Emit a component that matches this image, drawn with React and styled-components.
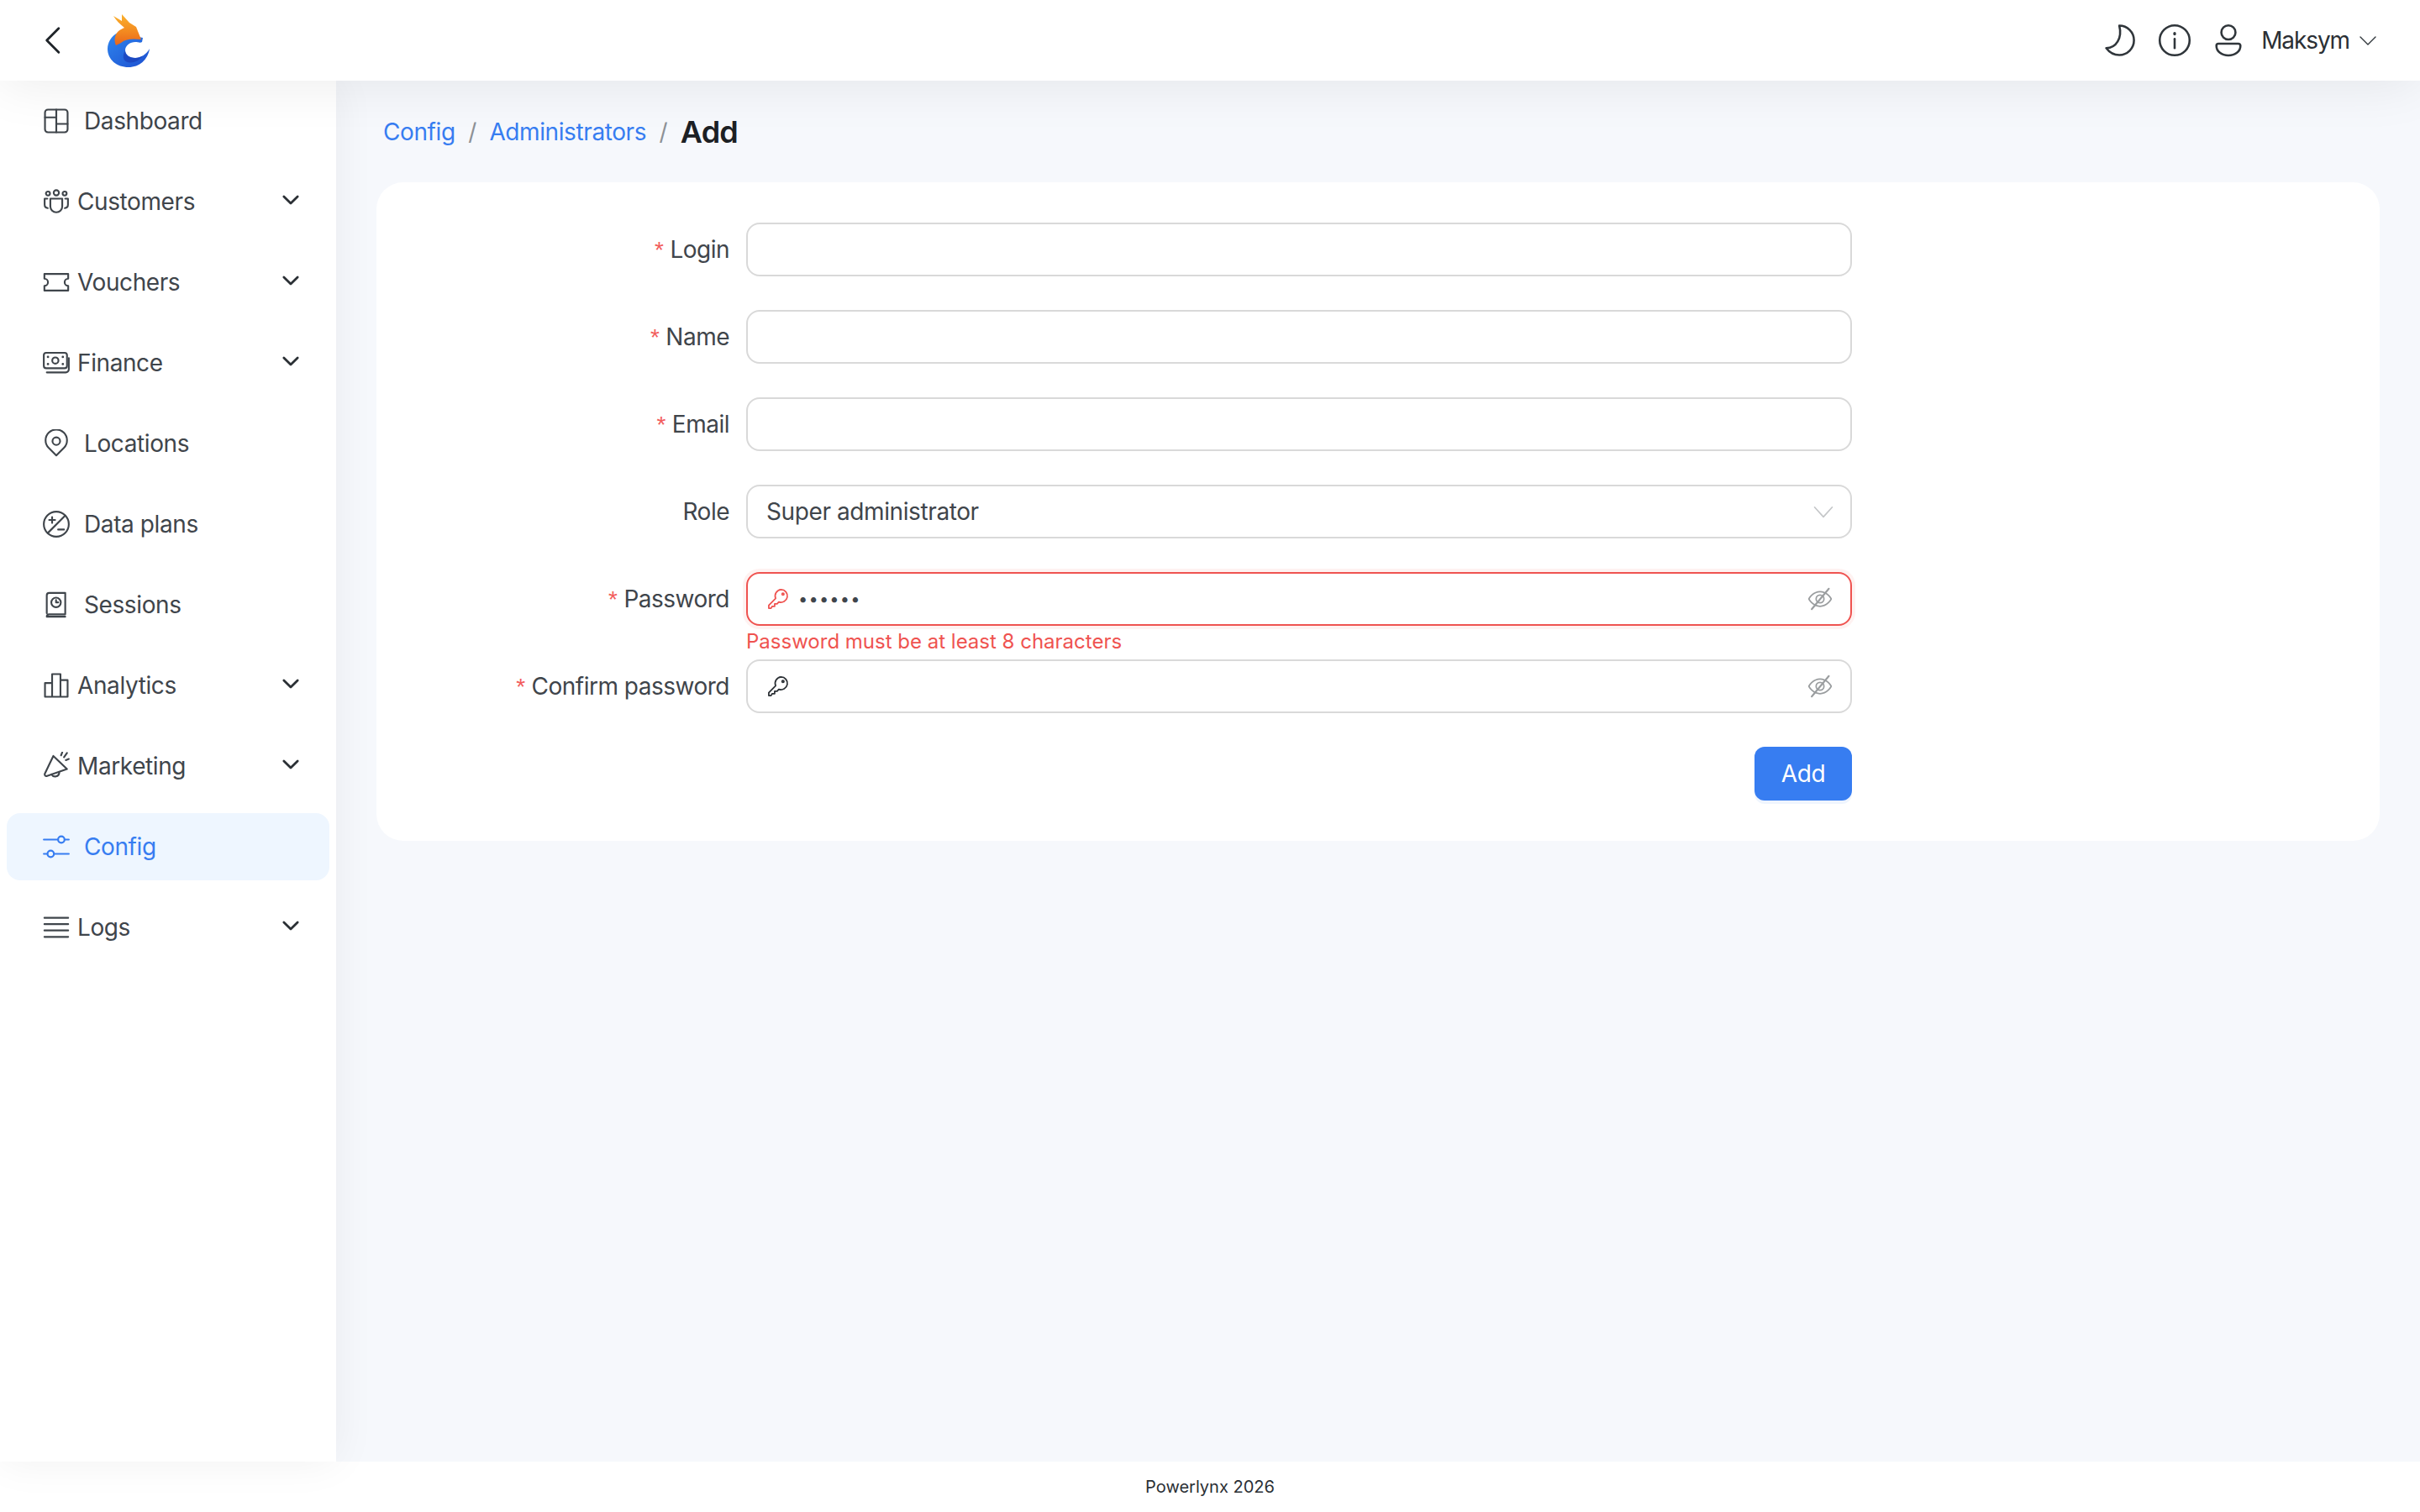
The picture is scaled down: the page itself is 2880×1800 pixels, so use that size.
import React from "react";
import styled, { createGlobalStyle } from "styled-components";

const Global = createGlobalStyle`
  html, body { margin: 0; padding: 0; height: 100%; }
  body { font-family: Inter, "Liberation Sans", sans-serif; background: #f6f8fc; color: #343a40; letter-spacing: -0.4px; }
  #root { height: 100%; }
  * { box-sizing: border-box; }
`;

const Page = styled.div`
  width: 2880px; height: 1800px; display: flex; flex-direction: column; overflow: hidden; background: #f6f8fc;
`;
const Header = styled.header`
  position: relative; z-index: 3; height: 96px; flex: none; background: #fff;
  display: flex; align-items: center; justify-content: space-between;
  padding: 0 50px 0 48px; box-shadow: 0 4px 64px rgba(0, 0, 0, 0.08);
`;
const HeaderLeft = styled.div`display: flex; align-items: center; gap: 44px;`;
const BackIcon = styled.span`display: flex; width: 40px; height: 40px; margin-left: -4px; color: #1f2429;`;
const HeaderRight = styled.div`display: flex; align-items: center; color: #1f2429;`;
const HeaderIcon = styled.span`display: flex; width: 44px; height: 44px; margin-right: 20px; color: #30363b;`;
const UserName = styled.span`font-size: 28px; margin-left: -3px; margin-right: 10px; letter-spacing: -1.1px; color: #2b3035;`;
const UserCaret = styled.span`display: flex; width: 24px; height: 24px; color: #30363b;`;
const Middle = styled.div`flex: 1; display: flex; min-height: 0;`;
const Sidebar = styled.nav`
  position: relative; z-index: 2; width: 400px; flex: none; background: #fff;
  padding: 8px 8px 0; display: flex; flex-direction: column; gap: 16px;
  box-shadow: 0 0 48px rgba(0, 0, 0, 0.06);
`;
const Item = styled.div`
  height: 80px; border-radius: 16px; display: flex; align-items: center; padding-left: 42px; padding-right: 32px;
  font-size: 28px; color: ${p => (p.$active ? "#377df1" : "#3f454b")};
  background: ${p => (p.$active ? "#eef6ff" : "transparent")};
`;
const ItemIcon = styled.span`display: flex; width: 34px; height: 34px; flex: none; margin-right: ${p => (p.$sub ? "8px" : "16px")};`;
const ItemLabel = styled.span`flex: 1;`;
const Chevron = styled.span`display: flex; width: 28px; height: 28px; color: #2b3035; margin-top: -4px;`;
const Content = styled.main`flex: 1; padding: 0 48px; min-width: 0;`;
const Crumbs = styled.div`
  height: 121px; display: flex; align-items: center; padding: 1px 8px 0; font-size: 28px;
`;
const Crumb = styled.span`color: #377df1;`;
const Sep = styled.span`color: #8d9196; margin: 0 15.500px;`;
const Current = styled.span`font-size: 36px; font-weight: 600; color: #1c2024; letter-spacing: -0.8px;`;
const Card = styled.section`
  background: #fff; border-radius: 32px; padding: 48px; height: 784px;
  display: flex; flex-direction: column;
`;
const Row = styled.div`
  display: grid; grid-template-columns: 372px 1316px; column-gap: 20px; align-items: center;
  height: 64px; margin-bottom: 40px; position: relative;
`;
const Label = styled.label`font-size: 28px; letter-spacing: -0.5px; color: #3f454b; text-align: right; white-space: nowrap;`;
const Star = styled.span`font-family: "Liberation Sans", sans-serif; color: #f25c5c; margin-right: 8px;`;
const Field = styled.div`
  height: 64px; border-radius: 16px; background: #fff; display: flex; align-items: center; padding: 0 22px;
  border: 2px solid ${p => (p.$error ? "#ef5350" : "#d9d9d9")};
  box-shadow: ${p => (p.$error ? "0 0 0 4px rgba(239, 83, 80, 0.08)" : "none")};
  color: ${p => (p.$error ? "#ef5350" : "#2b3035")};
  font-size: 28px;
`;
const FieldIcon = styled.span`display: flex; width: 28px; height: 28px; flex: none; margin-right: 10px;`;
const FieldValue = styled.span`flex: 1; color: #3f454b;`;
const Dots = styled.span`flex: 1; color: #3f454b; font-size: 20px; letter-spacing: 1.2px;`;
const TrailIcon = styled.span`display: flex; width: 28px; height: 28px; flex: none; color: #9a9d9f;`;
const SelectCaret = styled(TrailIcon)`color: #c4c6c8; margin-right: -4px;`;
const ErrorText = styled.div`
  position: absolute; left: 392px; top: 63px; line-height: 40px; font-size: 24px; letter-spacing: 0; color: #ef5350; white-space: nowrap;
`;
const Actions = styled.div`display: flex; justify-content: flex-end; width: 1708px;`;
const Button = styled.button`
  width: 116px; height: 64px; border: 0; border-radius: 12px; background: #377df1; color: #fff;
  font: 400 28px Inter, sans-serif; letter-spacing: -0.4px; box-shadow: 0 4px 0 rgba(55, 125, 241, 0.08);
`;
const Footer = styled.footer`
  height: 60px; flex: none; background: #fff; display: flex; align-items: center; justify-content: center;
  font-size: 20px; color: #2b3035; letter-spacing: 0;
`;

const S = ({ children, w = 1.5 }) => (
  <svg width="100%" height="100%" viewBox="0 0 24 24" fill="none" stroke="currentColor" strokeWidth={w} strokeLinecap="round" strokeLinejoin="round">{children}</svg>
);

const icons = {
  dash: <S><rect x="2.5" y="2.500" width="19" height="19" rx="2.500" /><path d="M2.500 9h9.500M12 2.500v19M12 14.500h9.500" /></S>,
  cust: <S><circle cx="12" cy="4.600" r="2.200" /><circle cx="5" cy="5.200" r="1.700" /><circle cx="19" cy="5.200" r="1.700" /><path d="M7 9.500h10v6.500a5 5 0 0 1-10 0z" /><path d="M4.500 9.500H2.200v5a3 3 0 0 0 2.600 3M19.500 9.500h2.300v5a3 3 0 0 1-2.600 3" /></S>,
  vouch: <S><path d="M2 5h20v4a3 3 0 0 0 0 6v4H2v-4a3 3 0 0 0 0-6z" /></S>,
  fin: <S><rect x="1.500" y="3.500" width="19.500" height="13" rx="2" /><circle cx="11.200" cy="10" r="2.600" /><path d="M5 7v.01M5 13v.01M17.500 7v.01M17.500 13v.01" strokeWidth="2" /><path d="M4 20h16a2.500 2.500 0 0 0 2.500-2.500V8" /></S>,
  loc: <S><path d="M12 22l-6.500-6.500a9 9 0 1 1 13 0z" /><circle cx="12" cy="10" r="3.200" /></S>,
  plan: <S><circle cx="12" cy="12" r="10.500" /><path d="M4.800 19.500L19.500 4.800M6 8.500h5M8.500 6v5M13.500 16.500h5" /></S>,
  sess: <S><path d="M4 19V4a2 2 0 0 1 2-2h13.500v18H6a2 2 0 0 0-2 2h15.500" /><circle cx="11.800" cy="10" r="4" /><path d="M11.800 8v2h1.800" /></S>,
  ana: <S><path d="M2.500 21.500V10h6v11.500M8.500 21.500V2.500h7v19M15.500 7.500h6v14M2.500 21.500h19" /></S>,
  mark: <S><path d="M9.500 3.500L21 14.500 3.800 20.500a1.500 1.500 0 0 1-1.500-2z" /><path d="M8 19a3.500 3.500 0 0 0 6.500-1.500" /><path d="M16 3l1-2.500M20 7l2.500-1M18.500 4.500L21 1" /></S>,
  conf: <S><path d="M1.500 6h12M19 6h3.500M1.500 18h3M10 18h12.500" /><circle cx="16.200" cy="6" r="2.700" /><circle cx="7.300" cy="18" r="2.700" /></S>,
  logs: <S><path d="M2 4h20M2 9.300h20M2 14.600h20M2 20h20" /></S>,
  key: <S><path d="M15 2.500a6.500 6.500 0 1 1-2.300 12.600L11 17H8.500v2.500H6L4.800 21.500H2.500v-3l7-7A6.500 6.500 0 0 1 15 2.500z" /><circle cx="17" cy="7" r="1" /></S>,
  eye: <S><path d="M.5 12s4-7.500 11.500-7.500S23.500 12 23.500 12s-4 7.500-11.500 7.500S.5 12 .5 12z" /><circle cx="12" cy="12" r="4" /><path d="M3.500 22.500L21 1.500" strokeWidth="1.800" /></S>,
};

const ChevronIcon = () => <Chevron><S w={2.4}><path d="M5 8.500l7 7 7-7" /></S></Chevron>;

const Logo = () => (
  <svg width="50" height="63" viewBox="0 0 50 63">
    <defs>
      <linearGradient id="logoBlue" x1="0" y1="0" x2="1" y2="1"><stop offset="0" stopColor="#2f86ee" /><stop offset="1" stopColor="#1c4fd0" /></linearGradient>
      <linearGradient id="logoOrange" x1="0" y1="0" x2="0" y2="1"><stop offset="0" stopColor="#fbb22d" /><stop offset=".6" stopColor="#f2861f" /><stop offset="1" stopColor="#e8641c" /></linearGradient>
    </defs>
    <path d="M12 22C4 26 0 34 0 41c0 13 11 22 25 22 13 0 23-9 25-22-4 7-11 11-17 11-7 0-12-4-12-9 0-6 6-10 12-10 3 0 6 1.500 8 0l1-5z" fill="url(#logoBlue)" />
    <path d="M21 43c0 5 5 9 12 9 3 0 6-1 9-2.500-4 5-9 8-15 8-7 0-11-6-6-14.500z" fill="#1a3fb8" opacity=".7" />
    <path d="M7 2l10 6V0l9 10 8 5 6 15c-10-1-18-1-24 4l-6 3C7 30 9 24 13 20c2-2 5-3 7-4C15 12 10 7 7 2z" fill="url(#logoOrange)" />
  </svg>
);

const menu = [
  ["dash", "Dashboard"], ["cust", "Customers", 1], ["vouch", "Vouchers", 1], ["fin", "Finance", 1], ["loc", "Locations"],
  ["plan", "Data plans"], ["sess", "Sessions"], ["ana", "Analytics", 1], ["mark", "Marketing", 1], ["conf", "Config", 0, 1], ["logs", "Logs", 1],
];

export default function App() {
  return (
    <Page>
      <Global />
      <Header>
        <HeaderLeft>
          <BackIcon><S w={1.7}><path d="M15.500 3.500L7 12l8.500 8.500" /></S></BackIcon>
          <Logo />
        </HeaderLeft>
        <HeaderRight>
          <HeaderIcon><S w={1.4}><path d="M11 2.500a9.500 9.500 0 0 1 0 19c-3.500 0-6.500-1.800-8.500-4.500 6.500 0 10.500-6.500 8.500-14.500z" /></S></HeaderIcon>
          <HeaderIcon><S w={1.4}><circle cx="12" cy="12" r="9.700" /><path d="M12 11v6" /><path d="M12 7.500v.4" strokeWidth="1.800" /></S></HeaderIcon>
          <HeaderIcon><S w={1.4}><circle cx="12" cy="6.900" r="4.600" /><path d="M5.500 14.200h13a1.300 1.300 0 0 1 1.300 1.300c0 3.800-3.500 6.300-7.800 6.300s-7.800-2.500-7.800-6.300a1.300 1.300 0 0 1 1.300-1.300z" /></S></HeaderIcon>
          <UserName>Maksym</UserName>
          <UserCaret><S w={1.4}><path d="M3 8l9 9 9-9" /></S></UserCaret>
        </HeaderRight>
      </Header>
      <Middle>
        <Sidebar>
          {menu.map(([ic, label, sub, active]) => (
            <Item key={label} $active={active}>
              <ItemIcon $sub={sub}>{icons[ic]}</ItemIcon>
              <ItemLabel>{label}</ItemLabel>
              {sub ? <ChevronIcon /> : null}
            </Item>
          ))}
        </Sidebar>
        <Content>
          <Crumbs>
            <Crumb>Config</Crumb><Sep>/</Sep><Crumb>Administrators</Crumb><Sep>/</Sep><Current>Add</Current>
          </Crumbs>
          <Card>
            <Row><Label><Star>*</Star>Login</Label><Field /></Row>
            <Row><Label><Star>*</Star>Name</Label><Field /></Row>
            <Row><Label><Star>*</Star>Email</Label><Field /></Row>
            <Row><Label>Role</Label><Field><FieldValue>Super administrator</FieldValue><SelectCaret><S w={1.4}><path d="M3 7.500l9 10 9-10" /></S></SelectCaret></Field></Row>
            <Row>
              <Label><Star>*</Star>Password</Label>
              <Field $error><FieldIcon>{icons.key}</FieldIcon><Dots>••••••</Dots><TrailIcon>{icons.eye}</TrailIcon></Field>
              <ErrorText>Password must be at least 8 characters</ErrorText>
            </Row>
            <Row><Label><Star>*</Star>Confirm password</Label><Field><FieldIcon>{icons.key}</FieldIcon><FieldValue /><TrailIcon>{icons.eye}</TrailIcon></Field></Row>
            <Actions><Button>Add</Button></Actions>
          </Card>
        </Content>
      </Middle>
      <Footer>Powerlynx 2026</Footer>
    </Page>
  );
}
